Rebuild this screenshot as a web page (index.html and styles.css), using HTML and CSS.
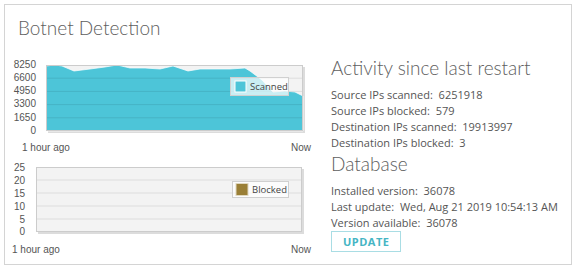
FILE: index.html
```html
<!DOCTYPE html>
<html lang="en">
<head>
    <meta charset="UTF-8">
    <title>Botnet Detection</title>
    <link rel="stylesheet" href="styles.css">
</head>
<body>
    <div class="card">
        <h1 class="card-title">Botnet Detection</h1>
        <div class="card-body">
            <div class="charts">
                <svg class="chart" width="312" height="82" viewBox="0 0 312 82">
                    <rect class="plot-shadow" x="43" y="12" width="257" height="66"/>
                    <rect class="plot-bg" x="41" y="10" width="257" height="66"/>
                    <polygon class="area-scanned" points="41,11 50,10 57,11 69,16 85,14 100,12 112,10 125,13 140,13 155,14 168,11 183,16 195,14 210,14 225,14 240,13 245,16 257,25 268,37 280,36 290,37 298,41 298,76 41,76"/>
                    <g class="grid">
                        <line x1="41" y1="23.2" x2="298" y2="23.2"/>
                        <line x1="41" y1="36.4" x2="298" y2="36.4"/>
                        <line x1="41" y1="49.6" x2="298" y2="49.6"/>
                        <line x1="41" y1="62.8" x2="298" y2="62.8"/>
                    </g>
                    <rect class="plot-frame" x="41.5" y="10.5" width="256" height="65"/>
                    <g class="y-labels">
                        <text x="31" y="13">8250</text>
                        <text x="31" y="26">6600</text>
                        <text x="31" y="39">4950</text>
                        <text x="31" y="52">3300</text>
                        <text x="31" y="66">1650</text>
                        <text x="31" y="79">0</text>
                    </g>
                    <rect class="legend" x="225.5" y="22.5" width="58" height="18"/>
                    <rect class="swatch-scanned" x="230" y="26" width="11" height="11"/>
                    <text class="legend-text" x="245" y="35">Scanned</text>
                </svg>
                <div class="x-axis x-axis-first">
                    <span>1 hour ago</span>
                    <span>Now</span>
                </div>

                <svg class="chart" width="312" height="82" viewBox="0 0 312 82">
                    <rect class="plot-shadow" x="33" y="11" width="266" height="65"/>
                    <rect class="plot-bg" x="31" y="9" width="266" height="65"/>
                    <g class="grid">
                        <line x1="31" y1="22" x2="297" y2="22"/>
                        <line x1="31" y1="35" x2="297" y2="35"/>
                        <line x1="31" y1="48" x2="297" y2="48"/>
                        <line x1="31" y1="61" x2="297" y2="61"/>
                    </g>
                    <line class="zero-line" x1="31" y1="73.5" x2="297" y2="73.5"/>
                    <rect class="plot-frame" x="31.5" y="9.5" width="265" height="64"/>
                    <g class="y-labels">
                        <text x="20" y="13">25</text>
                        <text x="20" y="26">20</text>
                        <text x="20" y="39">15</text>
                        <text x="20" y="52">10</text>
                        <text x="20" y="65">5</text>
                        <text x="20" y="77">0</text>
                    </g>
                    <rect class="legend" x="227.5" y="23.5" width="56" height="16"/>
                    <rect class="swatch-blocked" x="231" y="25.5" width="12" height="12"/>
                    <text class="legend-text" x="247" y="35">Blocked</text>
                </svg>
                <div class="x-axis x-axis-second">
                    <span>1 hour ago</span>
                    <span>Now</span>
                </div>
            </div>

            <div class="info">
                <h2 class="info-title">Activity since last restart</h2>
                <ul class="info-list">
                    <li>Source IPs scanned:&nbsp; 6251918</li>
                    <li>Source IPs blocked:&nbsp; 579</li>
                    <li>Destination IPs scanned:&nbsp; 19913997</li>
                    <li>Destination IPs blocked:&nbsp; 3</li>
                </ul>
                <h2 class="info-title info-title-db">Database</h2>
                <ul class="info-list">
                    <li>Installed version:&nbsp; 36078</li>
                    <li>Last update:&nbsp; Wed, Aug 21 2019 10:54:13 AM</li>
                    <li>Version available:&nbsp; 36078</li>
                </ul>
                <button class="update-button" type="button">UPDATE</button>
            </div>
        </div>
    </div>
</body>
</html>
```

FILE: styles.css
```css
:root {
    --text-color: #555555;
    --heading-color: #5e5e5e;
    --border-color: #d4d4d4;
    --scanned-color: #4dc5d8;
    --blocked-color: #9a7f36;
    --accent-color: #45b5c4;
}

*, *::before, *::after {
    box-sizing: border-box;
}

body {
    margin: 0;
    background: #ffffff;
    font-family: "Open Sans", "Liberation Sans", sans-serif;
    color: var(--text-color);
}

.card {
    margin: 4px;
    width: 568px;
    height: 261px;
    border: 1px solid var(--border-color);
    padding: 10px 0 0 0;
}

.card-title {
    margin: 0 0 0 13px;
    font-family: Lato, "Open Sans", sans-serif;
    font-size: 19px;
    font-weight: 300;
    line-height: 26px;
    color: var(--heading-color);
}

.card-body {
    display: flex;
    gap: 14px;
    margin-top: 14px;
}

/* ----- Charts ----- */
.charts {
    width: 312px;
    display: flex;
    flex-direction: column;
}

.chart {
    display: block;
    font-family: "Liberation Sans", Arial, sans-serif;
}

.plot-shadow {
    fill: #dcdcdc;
}

.plot-bg {
    fill: #f3f3f3;
}

.plot-frame {
    fill: none;
    stroke: #cccccc;
}

.grid line {
    stroke: rgba(0, 0, 0, 0.09);
    stroke-width: 1;
}

.area-scanned {
    fill: var(--scanned-color);
    stroke: rgba(255, 255, 255, 0.7);
    stroke-width: 1;
}

.zero-line {
    stroke: #bfb08a;
}

.y-labels text {
    font-size: 10px;
    fill: #555555;
    text-anchor: end;
}

.legend {
    fill: rgba(255, 255, 255, 0.7);
    stroke: #d0d0d0;
}

.swatch-scanned {
    fill: var(--scanned-color);
    stroke: #ffffff;
}

.swatch-blocked {
    fill: var(--blocked-color);
    stroke: #e0d8c0;
}

.legend-text {
    font-family: "Open Sans", sans-serif;
    font-size: 9.5px;
    fill: #444444;
}

.x-axis {
    display: flex;
    justify-content: space-between;
    font-family: "Liberation Sans", Arial, sans-serif;
    font-size: 10px;
    line-height: 14px;
    color: #555555;
    padding-right: 6px;
}

.x-axis-first {
    padding-left: 17px;
    margin: 4px 0 3px;
}

.x-axis-second {
    padding-left: 7px;
    margin-top: 3px;
}

/* ----- Info column ----- */
.info {
    display: flex;
    flex-direction: column;
    align-items: flex-start;
    padding-top: 1px;
}

.info-title {
    margin: 0 0 7px 0;
    font-family: Lato, "Open Sans", sans-serif;
    font-size: 19px;
    font-weight: 300;
    line-height: 24px;
    color: var(--heading-color);
}

.info-title-db {
    margin-top: 1px;
}

.info-list {
    list-style: none;
    margin: 0;
    padding: 0;
    font-size: 11px;
    line-height: 16px;
}

.update-button {
    margin-top: 0;
    padding: 0 11px;
    height: 21px;
    border: 1px solid #a9dde4;
    background: #ffffff;
    color: var(--accent-color);
    font-family: "Open Sans", sans-serif;
    font-size: 11px;
    font-weight: 700;
    letter-spacing: 0.5px;
}
```
